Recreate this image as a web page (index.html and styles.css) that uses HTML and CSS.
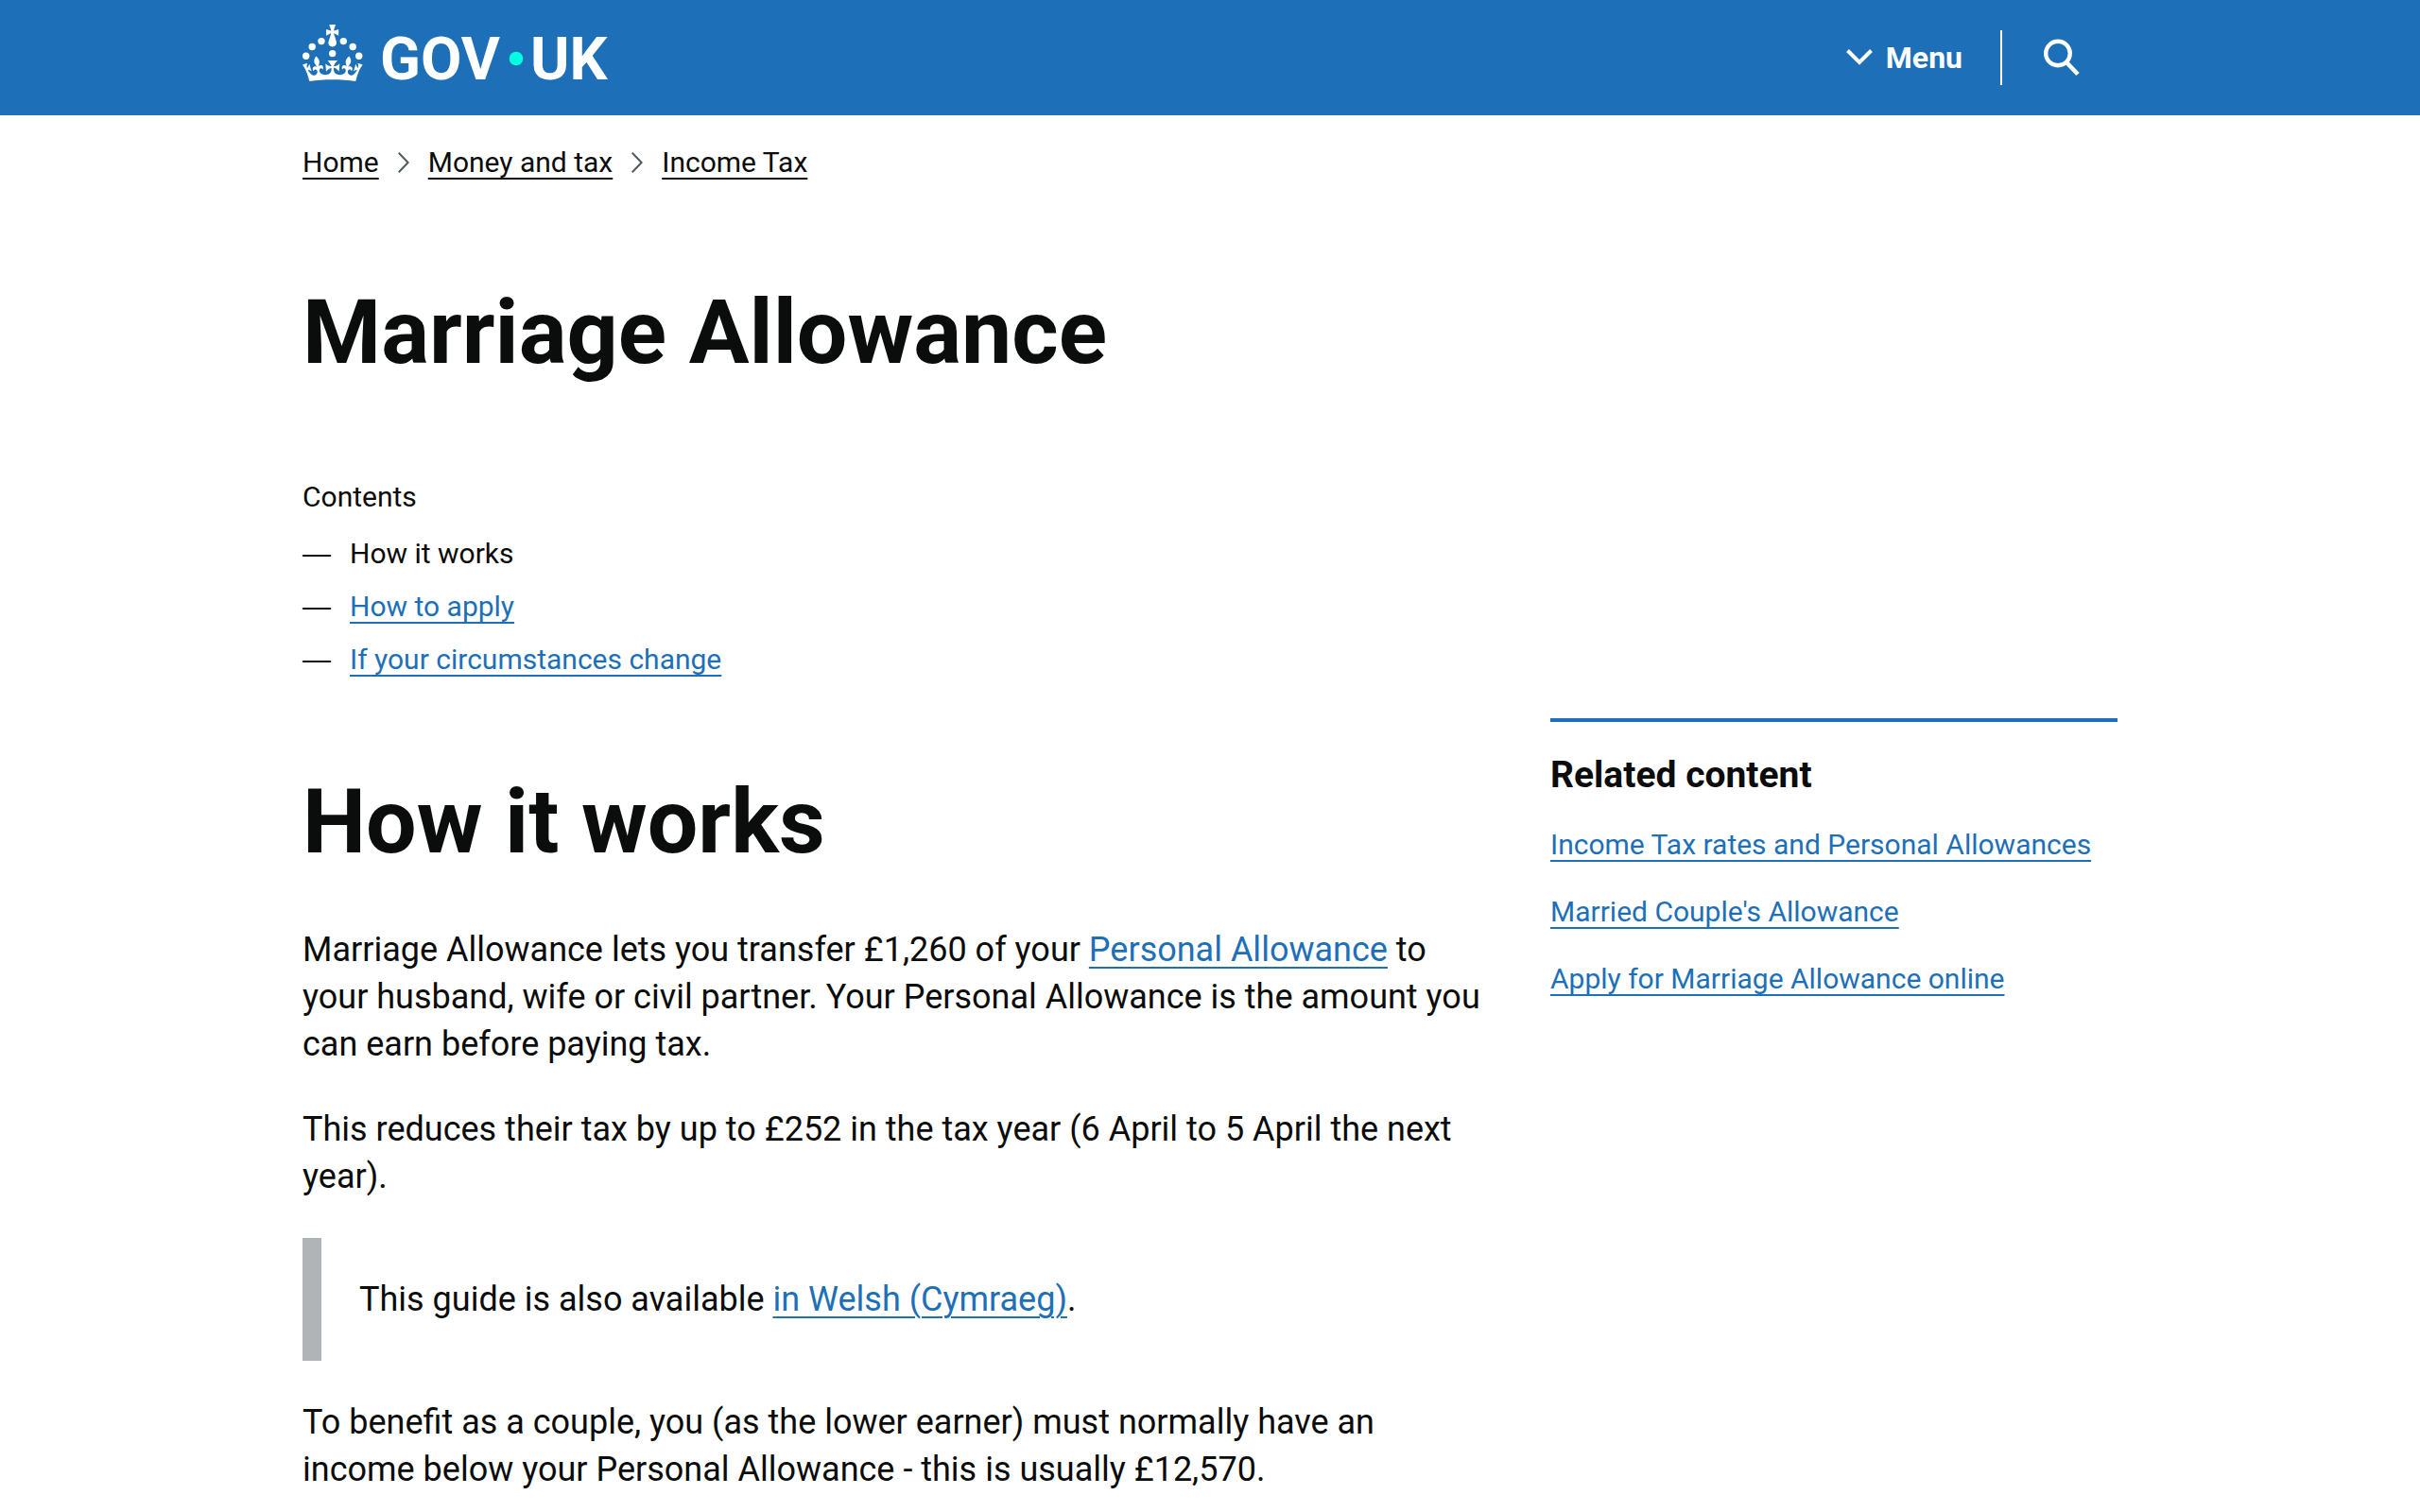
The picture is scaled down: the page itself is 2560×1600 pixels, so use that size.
FILE: index.html
```html
<!DOCTYPE html>
<html lang="en">
<head>
<meta charset="utf-8">
<meta name="viewport" content="width=device-width, initial-scale=1">
<title>Marriage Allowance: How it works - GOV.UK</title>
<link rel="stylesheet" href="styles.css">
</head>
<body>
<header class="header">
  <div class="container header-inner">
    <a class="logo" href="#" aria-label="GOV.UK home">
      <svg width="324" height="60" viewBox="0 0 324 60" fill="currentColor" aria-hidden="true">
        <circle cx="20" cy="17.6" r="3.7"/>
        <circle cx="10.2" cy="23.5" r="3.7"/>
        <circle cx="3.7" cy="33.2" r="3.7"/>
        <circle cx="31.7" cy="30.6" r="3.7"/>
        <circle cx="43.3" cy="17.6" r="3.7"/>
        <circle cx="53.2" cy="23.5" r="3.7"/>
        <circle cx="59.7" cy="33.2" r="3.7"/>
        <path d="M33.1,9.8c.2-.1.3-.3.5-.5l4.6,2.4v-6.8l-4.6,1.5c-.1-.2-.3-.3-.5-.5l1.9-5.9h-6.7l1.9,5.9c-.2.1-.3.3-.5.5l-4.6-1.5v6.8l4.6-2.4c.1.2.3.3.5.5l-2.6,8c-.9,2.8,1.2,5.7,4.1,5.7h0c3,0,5.1-2.9,4.1-5.7l-2.6-8ZM37,37.9s-3.4,3.8-4.1,6.1c2.2,0,4.2-.5,6.4-2.8l-.7,8.5c-2-2.8-4.4-4.1-5.7-3.8.1,3.1.5,6.7,5.8,7.2,3.7.3,6.7-1.5,7-3.8.4-2.6-2-4.3-3.7-1.6-1.4-4.5,2.4-6.1,4.9-3.2-1.9-4.5-1.8-7.7,2.4-10.9,3,4,2.6,7.3-1.2,11.1,2.4-1.3,6.2,0,4,4.6-1.2-2.8-3.7-2.2-4.2.2-.3,1.7.7,3.7,3,4.2,1.9.3,4.7-.9,7-5.9-1.3,0-2.4.7-3.9,1.7l2.4-8c.6,2.3,1.4,3.7,2.2,4.5.6-1.6.5-2.8,0-5.3l5,1.8c-2.6,3.6-5.2,8.7-7.3,17.5-7.4-1.1-15.7-1.7-24.5-1.7h0c-8.8,0-17.1.6-24.5,1.7-2.1-8.9-4.7-13.9-7.3-17.5l5-1.8c-.5,2.5-.6,3.7,0,5.3.8-.8,1.6-2.3,2.2-4.5l2.4,8c-1.5-1-2.6-1.7-3.9-1.7,2.3,5,5.2,6.2,7,5.9,2.3-.4,3.3-2.4,3-4.2-.5-2.4-3-3.1-4.2-.2-2.2-4.6,1.6-6,4-4.6-3.7-3.7-4.2-7.1-1.2-11.1,4.2,3.2,4.3,6.4,2.4,10.9,2.5-2.8,6.3-1.3,4.9,3.2-1.8-2.7-4.1-1-3.7,1.6.3,2.3,3.3,4.1,7,3.8,5.4-.5,5.7-4.2,5.8-7.2-1.3-.2-3.7,1-5.7,3.8l-.7-8.5c2.2,2.3,4.2,2.7,6.4,2.8-.7-2.3-4.1-6.1-4.1-6.1h10.6,0Z"/>
        <text class="logo-text" x="82" y="58">GOV</text>
        <circle class="logo-dot" cx="226" cy="36" r="7.3"/>
        <text class="logo-text" x="241" y="58">UK</text>
      </svg>
    </a>
    <div class="header-actions">
      <button class="menu-button" type="button">
        <svg width="28" height="18" viewBox="0 0 28 18" fill="none" stroke="currentColor" stroke-width="4" aria-hidden="true"><path d="M1.5 1.5 14 14 26.500 1.5"/></svg>
        Menu
      </button>
      <button class="search-button" type="button" aria-label="Search GOV.UK">
        <svg width="38" height="40" viewBox="0 0 38 40" fill="none" stroke="currentColor" aria-hidden="true"><circle cx="15" cy="15.500" r="12.800" stroke-width="4.400"/><path d="M24 25 36 37.500" stroke-width="4.600"/></svg>
      </button>
    </div>
  </div>
</header>
<div class="container">
  <nav class="breadcrumbs" aria-label="Breadcrumb">
    <a href="#">Home</a>
    <svg class="crumb-arrow" width="12" height="22" viewBox="0 0 12 22" fill="none" stroke="currentColor" stroke-width="2" aria-hidden="true"><path d="M.8.8 10.600 11 .8 21.200"/></svg>
    <a href="#">Money and tax</a>
    <svg class="crumb-arrow" width="12" height="22" viewBox="0 0 12 22" fill="none" stroke="currentColor" stroke-width="2" aria-hidden="true"><path d="M.8.8 10.600 11 .8 21.200"/></svg>
    <a href="#">Income Tax</a>
  </nav>
  <main>
    <h1 class="title">Marriage Allowance</h1>
    <nav class="contents" aria-labelledby="contents-title">
      <h2 class="contents-title" id="contents-title">Contents</h2>
      <ol class="contents-list">
        <li>How it works</li>
        <li><a href="#">How to apply</a></li>
        <li><a href="#">If your circumstances change</a></li>
      </ol>
    </nav>
    <div class="columns">
      <article class="article">
        <h2 class="title">How it works</h2>
        <p>Marriage Allowance lets you transfer £1,260 of your <a href="#">Personal Allowance</a> to your husband, wife or civil partner. Your Personal Allowance is the amount you can earn before paying tax.</p>
        <p>This reduces their tax by up to £252 in the tax year (6 April to 5 April the next year).</p>
        <div class="inset">This guide is also available <a href="#">in Welsh (Cymraeg)</a>.</div>
        <p>To benefit as a couple, you (as the lower earner) must normally have an income below your Personal Allowance - this is usually £12,570.</p>
      </article>
      <aside class="related">
        <h2 class="related-title">Related content</h2>
        <ul class="related-list">
          <li><a href="#">Income Tax rates and Personal Allowances</a></li>
          <li><a href="#">Married Couple's Allowance</a></li>
          <li><a href="#">Apply for Marriage Allowance online</a></li>
        </ul>
      </aside>
    </div>
  </main>
</div>
</body>
</html>
```
FILE: styles.css
```css
* {
  box-sizing: border-box;
}

body {
  margin: 0;
  background: #fff;
  color: #0b0c0c;
  font-family: Roboto, "Liberation Sans", sans-serif;
  font-size: 36px;
  line-height: 50px;
}

h1,
h2,
p,
ol,
ul {
  margin: 0;
  padding: 0;
}

ol,
ul {
  list-style: none;
}

a {
  color: #1d70b8;
  text-decoration: underline;
  text-decoration-thickness: 2px;
  text-underline-offset: 6px;
}

.container {
  max-width: 1920px;
  margin: 0 auto;
}

.header {
  background: #1d70b8;
  color: #fff;
}

.header-inner {
  display: flex;
  justify-content: space-between;
  min-height: 122px;
}

.logo {
  padding-top: 26px;
  color: #fff;
  text-decoration: none;
}

.logo svg {
  display: block;
  overflow: visible;
}

.logo-text {
  font-size: 63px;
  font-weight: 700;
}

.logo-dot {
  fill: #00ffe0;
}

.header-actions {
  display: flex;
  align-items: center;
}

.header-actions button {
  display: flex;
  align-items: center;
  justify-content: center;
  height: 58px;
  border: 0;
  background: none;
  color: #fff;
  font: 700 32px/40px Roboto, "Liberation Sans", sans-serif;
  cursor: pointer;
}

.menu-button {
  gap: 14px;
  padding: 0 40px;
}

.header-actions .search-button {
  padding: 0 40px 0 44px;
  border-left: 2px solid #fff;
}

.breadcrumbs {
  display: flex;
  align-items: center;
  gap: 20px;
  padding-top: 30px;
  font-size: 30px;
  line-height: 40px;
}

.breadcrumbs a {
  color: #0b0c0c;
}

.crumb-arrow {
  color: #505a5f;
}

.title {
  font-size: 95px;
  font-weight: 700;
  line-height: 100px;
}

h1.title {
  padding: 110px 0 104px;
}

.contents {
  padding-bottom: 42px;
  font-size: 30px;
  line-height: 40px;
}

.contents-title {
  margin-bottom: 20px;
  font-size: 30px;
  font-weight: 400;
}

.contents-list {
  display: grid;
  gap: 16px;
}

.contents-list li {
  display: flex;
}

.contents-list li::before {
  width: 50px;
  font-family: "Liberation Sans", sans-serif;
  content: "—";
}

.columns {
  display: grid;
  grid-template-columns: minmax(0, 21fr) minmax(0, 10fr);
  gap: 60px;
  align-items: start;
}

.article {
  padding-top: 60px;
}

.article .title {
  margin-bottom: 60px;
}

.article p {
  margin-bottom: 40px;
}

.inset {
  margin-bottom: 40px;
  padding: 40px;
  border-left: 20px solid #b1b4b6;
}

.related {
  padding-top: 36px;
  border-top: 4px solid #1d70b8;
  font-size: 30px;
  line-height: 40px;
}

.related-title {
  margin-bottom: 34px;
  font-size: 39px;
  font-weight: 700;
}

.related-list {
  display: grid;
  gap: 31px;
}
```
